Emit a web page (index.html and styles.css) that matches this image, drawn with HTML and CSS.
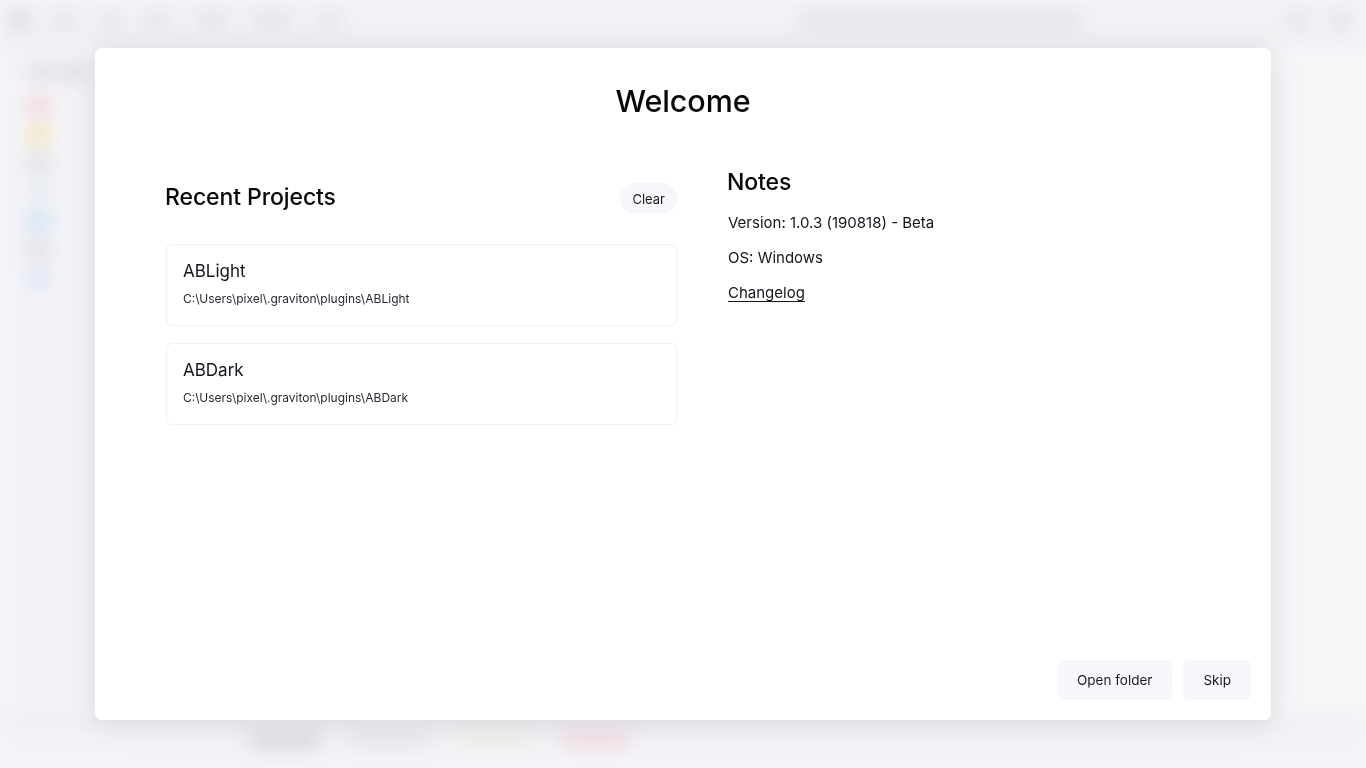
FILE: index.html
```html
<!DOCTYPE html>
<html lang="en">
<head>
<meta charset="utf-8">
<title>Welcome</title>
<link rel="stylesheet" href="styles.css">
</head>
<body>
<div class="app">
  <header class="topbar">
    <div class="menu">
      <span class="blob b-logo"></span>
      <span class="blob b-m1"></span>
      <span class="blob b-m2"></span>
      <span class="blob b-m3"></span>
      <span class="blob b-m4"></span>
      <span class="blob b-m5"></span>
      <span class="blob b-m6"></span>
    </div>
    <div class="title-blob"></div>
    <div class="win-ctrls">
      <span class="blob b-c"></span>
      <span class="blob b-c"></span>
    </div>
  </header>
  <div class="body">
    <aside class="sidebar">
      <span class="side-head"></span>
      <span class="side-icon red"></span>
      <span class="side-icon yellow"></span>
      <span class="side-icon gray"></span>
      <span class="side-icon blue1"></span>
      <span class="side-icon blue2"></span>
      <span class="side-icon gray"></span>
      <span class="side-icon blue3"></span>
    </aside>
    <main class="workspace"></main>
    <aside class="rightpanel"></aside>
  </div>
  <footer class="bottombar">
    <span class="blob f1"></span>
    <span class="blob f2"></span>
    <span class="blob f3"></span>
    <span class="blob f4"></span>
  </footer>
</div>

<div class="overlay">
  <section class="modal">
    <h1 class="welcome">Welcome</h1>
    <div class="columns">
      <div class="recent">
        <div class="recent-head">
          <h2 class="heading">Recent Projects</h2>
          <button class="clear-btn">Clear</button>
        </div>
        <div class="project-list">
          <div class="project-card">
            <div class="project-name">ABLight</div>
            <div class="project-path">C:\Users\pixel\.graviton\plugins\ABLight</div>
          </div>
          <div class="project-card">
            <div class="project-name">ABDark</div>
            <div class="project-path">C:\Users\pixel\.graviton\plugins\ABDark</div>
          </div>
        </div>
      </div>
      <div class="notes">
        <h2 class="heading">Notes</h2>
        <p class="note">Version: 1.0.3 (190818) - Beta</p>
        <p class="note">OS: Windows</p>
        <p class="note"><a class="changelog" href="#">Changelog</a></p>
      </div>
    </div>
    <div class="actions">
      <button class="action-btn">Open folder</button>
      <button class="action-btn">Skip</button>
    </div>
  </section>
</div>
</body>
</html>
```

FILE: styles.css
```css
* { box-sizing: border-box; }
html, body {
  margin: 0;
  padding: 0;
  width: 1366px;
  height: 768px;
  overflow: hidden;
  background: #f5f5f9;
  font-family: "Inter", "Noto Sans", sans-serif;
  color: #101018;
}

/* blurred background application */
.app {
  width: 1366px;
  height: 768px;
  display: flex;
  flex-direction: column;
  filter: blur(9px);
  background: #f6f6fa;
}
.topbar {
  height: 44px;
  background: #f1f1f5;
  border-bottom: 4px solid #e4e4e8;
  display: flex;
  align-items: center;
  justify-content: space-between;
  padding: 0 8px;
}
.menu { display: flex; align-items: center; gap: 20px; }
.blob { display: block; border-radius: 8px; background: #dcdce0; }
.b-logo { width: 22px; height: 22px; border-radius: 11px; background: #d2d2d6; }
.b-m1 { width: 28px; height: 16px; background: #dedee2; }
.b-m2 { width: 24px; height: 16px; background: #dedee2; }
.b-m3 { width: 32px; height: 16px; background: #dedee2; }
.b-m4 { width: 36px; height: 16px; background: #dcdce0; }
.b-m5 { width: 44px; height: 16px; background: #dcdce0; }
.b-m6 { width: 30px; height: 16px; background: #dedee2; }
.title-blob { width: 290px; height: 18px; background: #dfdfe3; border-radius: 8px; margin-left: 250px; }
.win-ctrls { display: flex; gap: 22px; padding-right: 8px; }
.b-c { width: 20px; height: 20px; background: #dcdce0; }

.body { flex: 1; display: flex; }
.sidebar {
  width: 95px;
  padding: 20px 0 0 26px;
  display: flex;
  flex-direction: column;
  gap: 9px;
  background: #f3f3f7;
}
.side-head { width: 64px; height: 16px; border-radius: 8px; background: #d8d8dc; margin-bottom: 6px; }
.side-icon { width: 26px; height: 20px; border-radius: 8px; }
.red { background: #f3cdd4; }
.yellow { background: #f6e3a6; }
.gray { background: #d9d9dd; }
.blue1 { background: #e1e8f2; }
.blue2 { background: #bfdcef; }
.blue3 { background: #d6dff5; }
.workspace { flex: 1; background: #ebebef; }
.rightpanel { width: 95px; background: #f7f7fa; }
.bottombar {
  height: 48px;
  background: #f3f3f7;
  border-top: 4px solid #e0e0e4;
  display: flex;
  align-items: flex-start;
  gap: 30px;
  padding: 6px 0 0 250px;
}
.f1 { width: 70px; height: 22px; background: #d6d6da; }
.f2 { width: 80px; height: 18px; background: #e4e4e8; }
.f3 { width: 70px; height: 18px; background: #f2eee2; }
.f4 { width: 70px; height: 20px; background: #f3d8e0; }

/* overlay + modal */
.overlay {
  position: fixed;
  inset: 0;
  display: flex;
  align-items: center;
  justify-content: center;
  background: rgba(245, 245, 250, 0.3);
}
.modal {
  width: 1176px;
  height: 672px;
  background: #ffffff;
  border-radius: 7px;
  box-shadow: 0 6px 32px rgba(40, 40, 60, 0.10);
  display: flex;
  flex-direction: column;
  padding: 33px 20px 20px 70px;
}
.welcome {
  margin: 0;
  text-align: center;
  font-size: 30.5px;
  font-weight: 500;
  line-height: 40px;
  padding-right: 50px;
  color: #08080c;
  letter-spacing: -0.1px;
}
.columns {
  flex: 1;
  display: flex;
  gap: 50px;
  margin-top: 41px;
}
.recent { width: 512px; }
.recent-head {
  display: flex;
  justify-content: space-between;
  align-items: center;
  padding-top: 21px;
}
.heading {
  margin: 0;
  font-size: 23px;
  font-weight: 500;
  line-height: 30px;
  color: #08080c;
  letter-spacing: -0.1px;
}
.recent-head .heading { margin-top: -3px; }
.clear-btn {
  font-family: inherit;
  font-size: 13px;
  color: #1c1c24;
  background: #f6f6fb;
  border: none;
  border-radius: 16px;
  height: 31px;
  padding: 0 12px;
}
.project-list {
  margin-top: 30px;
  display: flex;
  flex-direction: column;
  gap: 17px;
  padding-left: 1px;
}
.project-card {
  border: 1px solid #f1f1f5;
  box-shadow: 0 0 2px rgba(60, 60, 90, 0.06);
  border-radius: 6px;
  height: 82px;
  padding: 15px 16px 0 16px;
}
.project-name {
  font-size: 17px;
  line-height: 22px;
  color: #14141c;
}
.project-path {
  margin-top: 8px;
  font-size: 12px;
  line-height: 17px;
  color: #2a2a34;
}
.notes { flex: 1; padding-top: 5px; }
.note {
  margin: 0;
  font-size: 15px;
  line-height: 20px;
  color: #14141c;
  padding-left: 1px;
}
.notes .heading { margin-bottom: 16px; }
.note + .note { margin-top: 15px; }
.changelog { color: #14141c; text-decoration: underline; text-underline-offset: 3px; }
.actions {
  display: flex;
  justify-content: flex-end;
  gap: 11px;
}
.action-btn {
  font-family: inherit;
  font-size: 13.5px;
  color: #1c1c24;
  background: #f8f8fc;
  border: none;
  border-radius: 6px;
  height: 40px;
  padding: 0 20px;
}
```
